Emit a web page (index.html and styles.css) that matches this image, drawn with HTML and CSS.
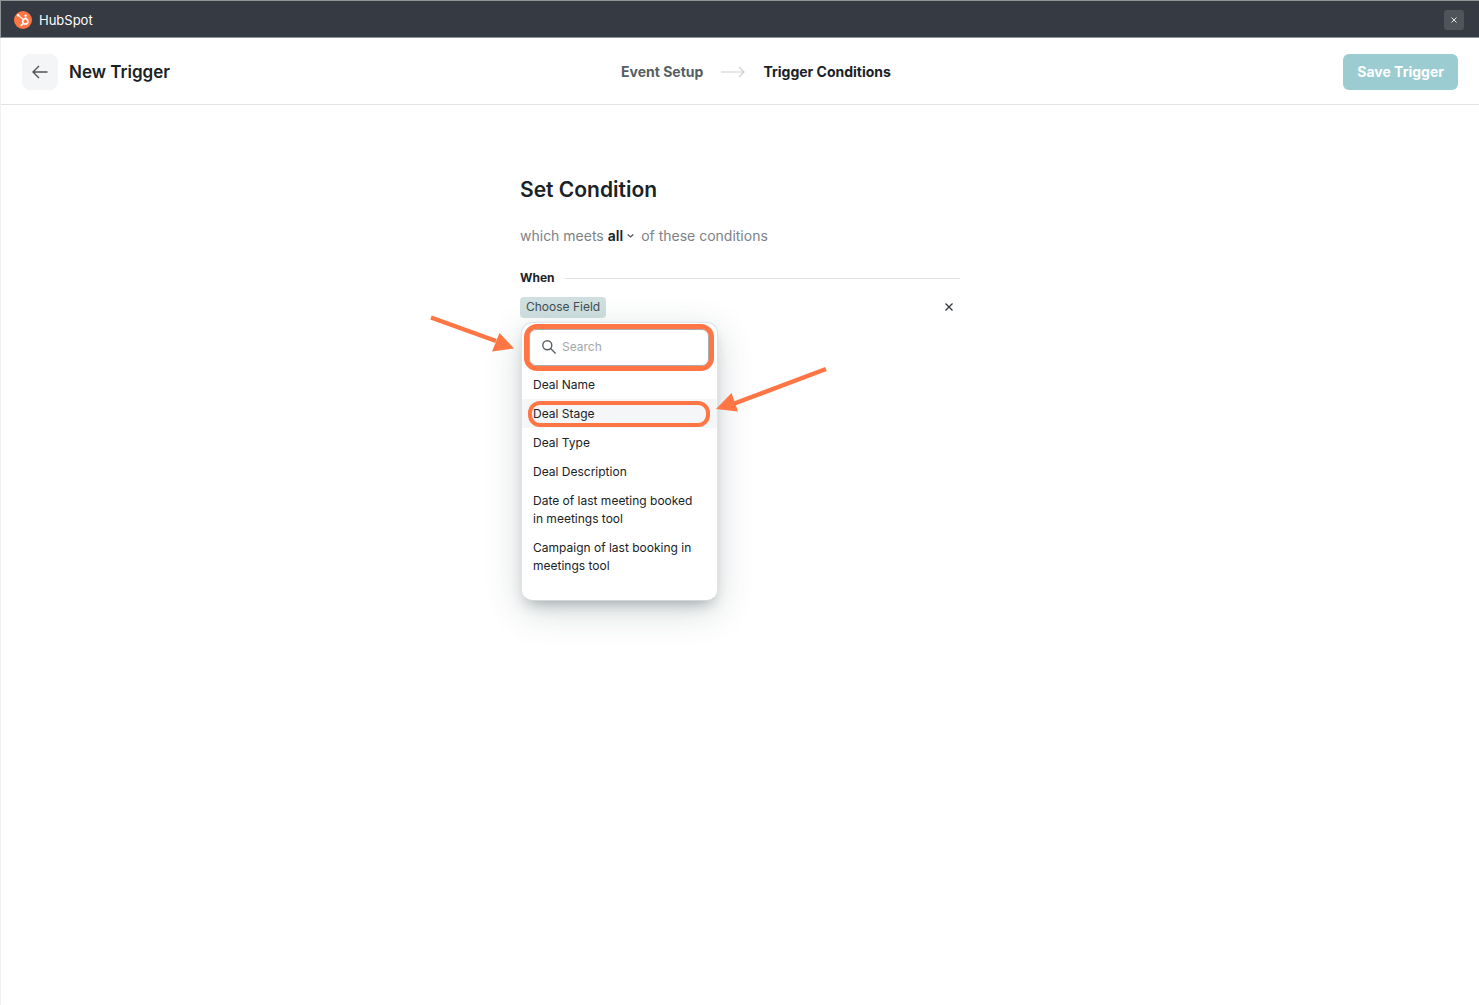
FILE: index.html
```html
<!DOCTYPE html>
<html lang="en">
<head>
<meta charset="utf-8">
<meta name="viewport" content="width=device-width, initial-scale=1">
<title>HubSpot – New Trigger</title>
<link rel="stylesheet" href="styles.css">
</head>
<body>
<div class="app">
  <div class="titlebar">
    <div class="brand">
      <svg class="brand-logo" viewBox="0 0 18 18" width="18" height="18" aria-hidden="true">
        <circle cx="9" cy="9" r="9" fill="#ff7543"/>
        <g fill="none" stroke="#fff" stroke-linecap="round">
          <circle cx="11.3" cy="10.4" r="2.6" stroke-width="1.5"/>
          <path d="M4.3 4.4 9.2 8.4M11.5 7.6V4.8M9.4 12.3 7.6 14" stroke-width="1.2"/>
        </g>
        <g fill="#fff"><circle cx="4.2" cy="4.3" r="1.3"/><circle cx="11.6" cy="4.6" r="1.2"/><circle cx="7.4" cy="14.2" r="1"/></g>
      </svg>
      <span>HubSpot</span>
    </div>
    <button class="window-close" type="button" aria-label="Close">
      <svg viewBox="0 0 6 6" width="6" height="6"><path d="M.5.5l5 5M5.5.5l-5 5" stroke="currentColor" fill="none"/></svg>
    </button>
  </div>

  <header class="header">
    <div class="header-start">
      <button class="back" type="button" aria-label="Back">
        <svg viewBox="0 0 16 14" width="16" height="14"><path d="M15.5 7H1M7 1 1 7l6 6" fill="none" stroke="currentColor" stroke-width="1.4"/></svg>
      </button>
      <h1 class="page-title">New Trigger</h1>
    </div>
    <nav class="steps" aria-label="Steps">
      <a class="step" href="#event">Event Setup</a>
      <svg viewBox="0 0 24 12" width="24" height="12" aria-hidden="true"><path d="M0 6h22.500M18 1l5 5-5 5" fill="none" stroke="#cdd1d2" stroke-width="1.2"/></svg>
      <a class="step step-current" href="#conditions" aria-current="step">Trigger Conditions</a>
    </nav>
    <div class="header-end">
      <button class="save" type="button">Save Trigger</button>
    </div>
  </header>

  <main class="content">
    <h2 class="heading">Set Condition</h2>
    <div class="match">
      <label for="match">which meets</label>
      <span class="match-picker">
        <select id="match" class="match-select"><option>all</option><option>any</option></select>
        <svg viewBox="0 0 7 4" width="7" height="4" aria-hidden="true"><path d="M.7.5l2.800 2.500L6.300.5" fill="none" stroke="#4b5458" stroke-width="1.2"/></svg>
      </span>
      <span>of these conditions</span>
    </div>
    <h3 class="when">When</h3>
    <div class="condition">
      <div class="field">
        <button class="field-button" type="button" aria-expanded="true">Choose Field</button>
        <div class="menu">
          <div class="search ring">
            <svg viewBox="0 0 14 14" width="14" height="14" aria-hidden="true"><g fill="none" stroke="#5a6064" stroke-width="1.4"><circle cx="5.300" cy="5.300" r="4.500"/><path d="M8.600 8.600l5 5"/></g></svg>
            <input class="search-input" type="text" placeholder="Search" aria-label="Search fields">
          </div>
          <ul class="options">
            <li><button class="option" type="button">Deal Name</button></li>
            <li><button class="option option-active ring" type="button">Deal Stage</button></li>
            <li><button class="option" type="button">Deal Type</button></li>
            <li><button class="option" type="button">Deal Description</button></li>
            <li><button class="option" type="button">Date of last meeting booked in meetings tool</button></li>
            <li><button class="option" type="button">Campaign of last booking in meetings tool</button></li>
          </ul>
        </div>
        <svg class="pointers" viewBox="0 0 400 120" width="400" height="120" aria-hidden="true">
          <g fill="#ff7543">
            <path d="M1 20.500 66 44" stroke="#ff7543" stroke-width="4.500"/>
            <path d="M84 51.500 69.500 36 62 54.500z"/>
            <path d="M396 72 303 107" stroke="#ff7543" stroke-width="4.500"/>
            <path d="M286 112l15.500-16 6.500 18.500z"/>
          </g>
        </svg>
      </div>
      <button class="remove" type="button" aria-label="Remove condition">
        <svg viewBox="0 0 8 8" width="8" height="8"><path d="M.5.5l7 7M7.500.5l-7 7" stroke="currentColor" stroke-width="1.300" fill="none"/></svg>
      </button>
    </div>
  </main>
</div>
</body>
</html>
```
FILE: styles.css
```css
* { box-sizing: border-box; }

body {
  margin: 0;
  background: #fff;
  color: #192226;
  font-family: Inter, "Liberation Sans", sans-serif;
  font-size: 12px;
  line-height: 18px;
}

button, input, select { font: inherit; color: inherit; border: 0; padding: 0; margin: 0; background: none; }
button { display: flex; align-items: center; justify-content: center; cursor: pointer; }
h1, h2, h3, ul { margin: 0; padding: 0; }
ul { list-style: none; }
svg { display: block; flex: none; overflow: visible; }

.app { min-height: 100vh; border-left: 1px solid #f0f0f0; }

.titlebar {
  display: flex;
  align-items: center;
  justify-content: space-between;
  height: 38px;
  margin-left: -1px;
  padding: 1px 15px 0 13px;
  background: #363a43;
  border: 1px solid #8f9496;
  border-right: 0;
  color: #fff;
}
.brand { display: flex; align-items: center; gap: 7px; font-size: 13px; }
.window-close { width: 20px; height: 20px; border-radius: 3px; background: #4f545b; color: #e4e6e7; }

.header {
  display: grid;
  grid-template-columns: 1fr auto 1fr;
  align-items: center;
  height: 67px;
  padding: 2px 21px 0;
  border-bottom: 1px solid #e1e3e4;
}
.header-start { display: flex; align-items: center; gap: 11px; }
.header-end { display: flex; justify-content: flex-end; }
.back { width: 36px; height: 36px; border-radius: 8px; background: #f4f5f6; color: #4d5356; }
.page-title { font-size: 17px; line-height: 24px; font-weight: 600; }
.steps { display: flex; align-items: center; gap: 18px; margin-left: 32px; font-size: 14px; font-weight: 700; }
.step { color: #555e62; text-decoration: none; }
.step-current { color: #192226; }
.save { height: 36px; padding: 0 14px; border-radius: 6px; background: #9accd1; color: #fff; font-size: 14px; font-weight: 700; }

.content { width: 100%; max-width: 440px; margin: 0 auto; padding-top: 71px; }
.heading { font-size: 21px; line-height: 28px; font-weight: 600; }
.match { display: flex; align-items: center; gap: 4px; margin-top: 22px; color: #7c8285; font-size: 14px; line-height: 20px; }
.match-picker { display: flex; align-items: center; gap: 4px; margin-right: 3px; }
.match-select { appearance: none; field-sizing: content; color: #192226; font-weight: 600; }
.when { display: flex; align-items: center; gap: 10px; margin-top: 23px; font-size: 12px; font-weight: 700; }
.when::after { content: ""; flex: 1; height: 1px; background: #e0e2e3; }

.condition { display: flex; align-items: center; justify-content: space-between; margin-top: 9px; }
.field { position: relative; }
.field-button { height: 21px; padding: 0 6px; border-radius: 4px; background: #d0e0e1; color: #434d51; }
.remove { width: 22px; height: 22px; color: #33393c; }

.menu {
  position: absolute;
  top: 25px;
  left: 1px;
  width: 197px;
  height: 279px;
  padding: 6px 0 0;
  border: 1px solid #dfe4e5;
  border-bottom-color: #d3d7d9;
  border-radius: 11px;
  background: #fff;
  box-shadow: 0 8px 14px -6px rgba(40, 60, 64, .35), 0 10px 36px rgba(40, 60, 64, .2);
}

/* Orange callout around a control */
.ring { position: relative; }
.ring::after { content: ""; position: absolute; border: 4px solid #ff7543; pointer-events: none; }

.search {
  display: flex;
  align-items: center;
  gap: 6px;
  height: 37px;
  margin: 0 8px 0 7px;
  padding: 0 12px;
  border: 1px solid #a9adb0;
  border-radius: 7px;
}
.search::after { inset: -6px; border-width: 5px; border-radius: 13px; }
.search-input { flex: 1; min-width: 0; outline: 0; }
.search-input::placeholder { color: #a3a7a9; opacity: 1; }

.options { padding-top: 4px; }
.option { display: block; width: 100%; padding: 6px 15px 5px 11px; text-align: left; }
.option-active { background: #f4f6f8; }
.option-active::after { inset: 2px 7px 1px 6px; border-radius: 12px; }

.pointers { position: absolute; top: 0; left: -90px; pointer-events: none; }
```
